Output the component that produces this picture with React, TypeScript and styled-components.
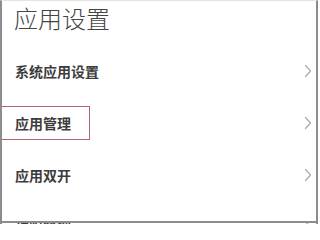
import React from "react";
import styled, { createGlobalStyle } from "styled-components";

const GlobalStyle = createGlobalStyle`
  html, body {
    margin: 0;
    padding: 0;
    background: #ffffff;
  }
  body {
    font-family: "Noto Sans CJK SC", "Noto Sans", sans-serif;
  }
`;

interface SettingItem {
  label: string;
  marked?: boolean;
}

const items: SettingItem[] = [
  { label: "系统应用设置" },
  { label: "应用管理", marked: true },
  { label: "应用双开" },
  { label: "权限管理" },
];

function Chevron() {
  return (
    <svg width="8" height="14" viewBox="0 0 8 14">
      <path
        d="M1.5 1.5 L6.5 7 L1.5 12.5"
        fill="none"
        stroke="#adadad"
        strokeWidth="1.3"
        strokeLinecap="round"
        strokeLinejoin="round"
      />
    </svg>
  );
}

export default function App() {
  return (
    <>
      <GlobalStyle />
      <Frame>
        <Title>应用设置</Title>
        <List>
          {items.map((item) => (
            <Row key={item.label}>
              <Label>{item.label}</Label>
              <Chevron />
              {item.marked && <Mark />}
            </Row>
          ))}
        </List>
      </Frame>
    </>
  );
}

const Frame = styled.div`
  position: relative;
  width: 318px;
  height: 224px;
  box-sizing: border-box;
  overflow: hidden;
  border-left: 2px solid #8c8c8c;
  border-right: 2px solid #8c8c8c;
  border-top: 1px solid #e4e4e4;
  background: #ffffff;

  &::after {
    content: "";
    position: absolute;
    left: 0;
    right: 0;
    bottom: 1px;
    height: 2px;
    background: #8c8c8c;
  }
`;

const Title = styled.h1`
  margin: 0;
  padding: 1px 0 0 12px;
  height: 36px;
  box-sizing: border-box;
  font-size: 24px;
  line-height: 32px;
  font-weight: 300;
  color: #444444;
`;

const List = styled.div`
  display: flex;
  flex-direction: column;
  margin-top: 8px;
`;

const Row = styled.div`
  position: relative;
  display: flex;
  align-items: center;
  justify-content: space-between;
  height: 52px;
  flex-shrink: 0;
  padding: 0 4px 0 13px;
`;

const Label = styled.span`
  font-size: 14px;
  font-weight: 700;
  color: #3c3c3c;
`;

const Mark = styled.div`
  position: absolute;
  left: -2px;
  top: 9px;
  width: 90px;
  height: 34px;
  box-sizing: border-box;
  border: 1.5px solid #b0646e;
`;
